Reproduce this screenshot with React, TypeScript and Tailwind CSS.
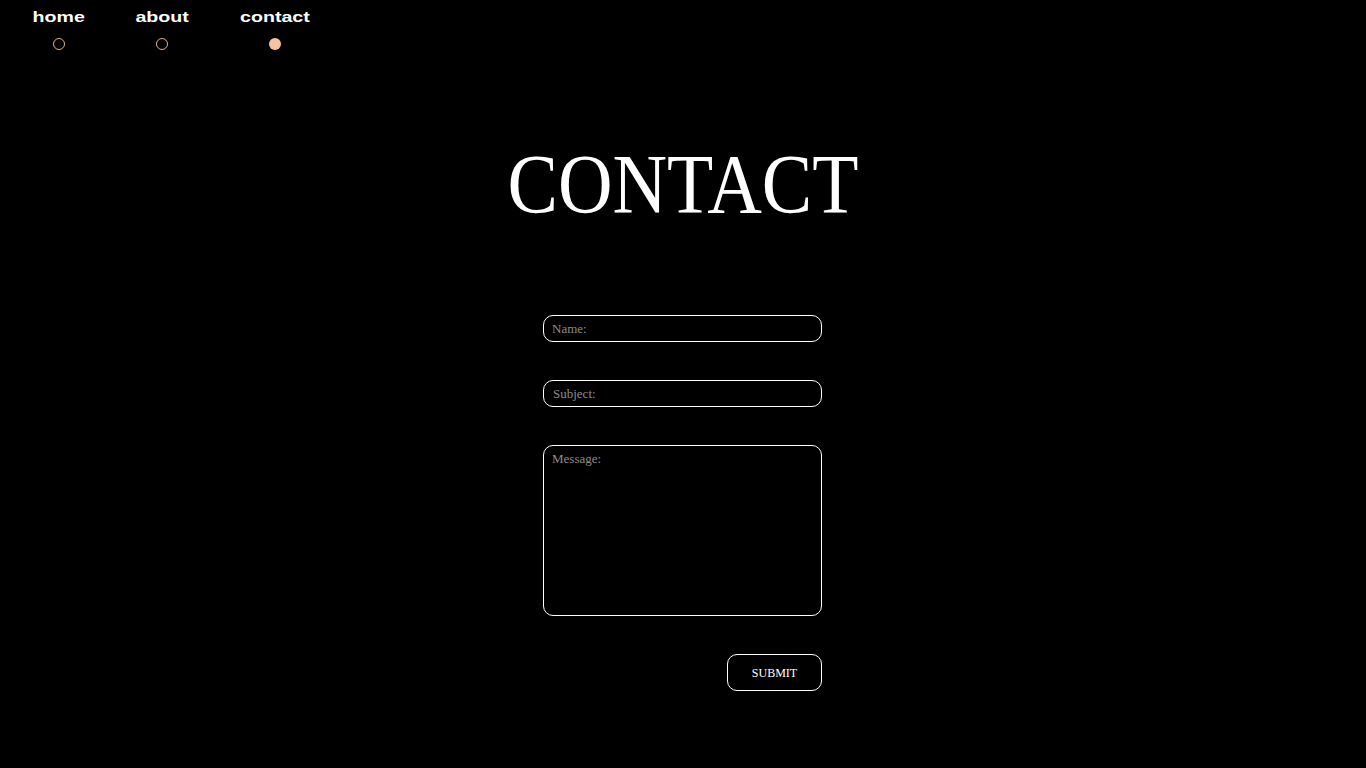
import React from "react";

const navItems = [
  { label: "home", width: "w-[52px]", active: false },
  { label: "about", width: "w-[54px]", active: false },
  { label: "contact", width: "w-[72px]", active: true },
];

function Nav() {
  return (
    <nav className="flex gap-[50px] pl-[33px] pt-[10px]">
      {navItems.map((item) => (
        <div key={item.label} className={`flex flex-col items-center ${item.width}`}>
          <span
            className="inline-block scale-x-[1.4] text-[14px] leading-none font-bold text-white"
            style={{ fontFamily: '"Liberation Sans", Arial, sans-serif' }}
          >
            {item.label}
          </span>
          <div
            className={
              item.active
                ? "mt-[14px] h-[12px] w-[12px] rounded-full bg-[#f6c3a0]"
                : "mt-[14px] h-[12px] w-[12px] rounded-full border border-[#e4b08a]"
            }
          />
        </div>
      ))}
    </nav>
  );
}

export default function App() {
  const serif = { fontFamily: '"Liberation Serif", "Times New Roman", serif' };
  return (
    <div className="min-h-screen w-full bg-black" style={serif}>
      <Nav />
      <main className="flex flex-col items-center">
        <h1 className="mt-[93px] scale-x-[0.9] text-[84px] leading-none font-normal text-white">
          CONTACT
        </h1>
        <form
          className="mt-[88px] mr-[1px] flex w-[279px] flex-col gap-[38px]"
          onSubmit={(e) => e.preventDefault()}
        >
          <input
            type="text"
            placeholder="Name:"
            className="h-[27px] w-full rounded-[10px] border border-white bg-black px-[8px] text-[13px] text-white outline-none placeholder:text-[#8c8c8c]"
          />
          <input
            type="text"
            placeholder="Subject:"
            className="h-[27px] w-full rounded-[10px] border border-white bg-black px-[9px] text-[13px] text-white outline-none placeholder:text-[#8c8c8c]"
          />
          <textarea
            placeholder="Message:"
            className="h-[171px] w-full resize-none rounded-[10px] border border-white bg-black px-[8px] py-[3px] text-[13px] text-white outline-none placeholder:text-[#8c8c8c]"
          />
          <button
            type="submit"
            className="h-[37px] w-[95px] self-end rounded-[10px] border border-white bg-black text-[12px] text-white uppercase"
          >
            Submit
          </button>
        </form>
      </main>
    </div>
  );
}
